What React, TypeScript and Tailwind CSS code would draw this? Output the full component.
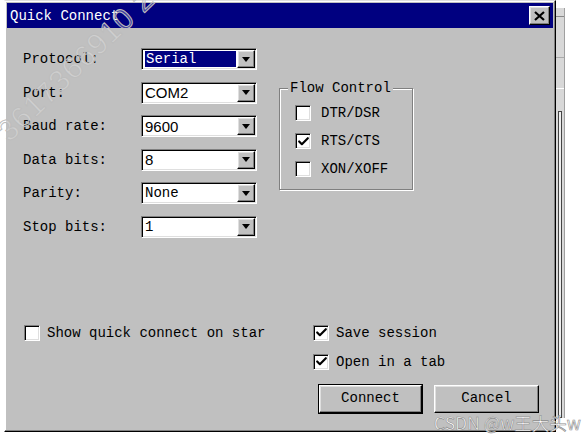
import { Check } from 'lucide-react'

const mono = "font-['Liberation_Mono',monospace]"

const sunken =
  'border border-t-[#808080] border-l-[#808080] border-b-white border-r-white shadow-[inset_1px_1px_0_#000,inset_-1px_-1px_0_#dfdfdf]'
const raised =
  'border border-t-white border-l-white border-b-black border-r-black shadow-[inset_-1px_-1px_0_#808080,inset_1px_1px_0_#dfdfdf]'

type Field = { label: string; value: string; sans?: boolean; active?: boolean }

const fields: Field[] = [
  { label: 'Protocol:', value: 'Serial', active: true },
  { label: 'Port:', value: 'COM2', sans: true },
  { label: 'Baud rate:', value: '9600', sans: true },
  { label: 'Data bits:', value: '8', sans: true },
  { label: 'Parity:', value: 'None' },
  { label: 'Stop bits:', value: '1' },
]

function Arrow() {
  return (
    <div className={`flex h-[18px] w-[18px] shrink-0 items-center justify-center bg-[#c0c0c0] ${raised}`}>
      <svg width="8" height="5" viewBox="0 0 8 5">
        <path d="M0 0h8L4 5z" fill="#000" />
      </svg>
    </div>
  )
}

function Select({ f }: { f: Field }) {
  return (
    <div className={`flex h-[22px] w-[116px] items-center bg-white pl-[3px] pr-[1px] ${sunken}`}>
      <div className="flex h-full flex-1 items-center py-[2px]">
        <span
          className={`flex h-full items-center text-[14px] leading-none ${f.sans ? "font-['Liberation_Sans',sans-serif] text-[15px]" : mono} ${
            f.active ? 'mr-[1px] w-full bg-[#000080] pl-[1px] text-white' : 'text-black'
          }`}
        >
          {f.value}
        </span>
      </div>
      <Arrow />
    </div>
  )
}

function Box({ checked }: { checked?: boolean }) {
  return (
    <div className={`flex h-[16px] w-[16px] shrink-0 items-center justify-center bg-white ${sunken}`}>
      {checked ? <Check size={13} strokeWidth={4} className="text-black" /> : null}
    </div>
  )
}

function CheckRow({ label, checked, gap = 'gap-[8px]' }: { label: string; checked?: boolean; gap?: string }) {
  return (
    <div className={`flex items-center ${gap}`}>
      <Box checked={checked} />
      <span className="text-[14px] leading-none text-black">{label}</span>
    </div>
  )
}

export default function App() {
  return (
    <div className={`relative flex h-[445px] w-[587px] overflow-hidden bg-white ${mono}`}>
      {/* dialog */}
      <div className="ml-[4px] flex h-[432px] w-[552px] shrink-0 flex-col border border-t-[#dfdfdf] border-l-white border-b-black border-r-black bg-[#c0c0c0] p-[2px] shadow-[inset_-1px_-1px_0_#808080,inset_1px_1px_0_#fff]">
        <div className="flex h-[25px] items-center justify-between bg-[#000080] pl-[3px] pr-[3px]">
          <span className="text-[14px] leading-none text-white">Quick Connect</span>
          <div className={`flex h-[19px] w-[21px] items-center justify-center bg-[#c0c0c0] ${raised}`}>
            <svg width="11" height="10" viewBox="0 0 11 10">
              <path d="M1 1l9 8M10 1l-9 8" stroke="#000" strokeWidth="2.2" />
            </svg>
          </div>
        </div>

        <div className="flex flex-1 flex-col">
          <div className="flex items-start pt-[20px]">
            <div className="flex flex-col gap-[11.6px] pl-[16px]">
              {fields.map((f) => (
                <div key={f.label} className="flex items-center">
                  <span className="w-[118px] text-[14px] leading-none text-black">{f.label}</span>
                  <Select f={f} />
                </div>
              ))}
            </div>

            <div className="relative ml-[22px] mt-[40px] h-[102px] w-[134px] border border-[#808080] shadow-[1px_1px_0_#fff,inset_1px_1px_0_#fff]">
              <span className="absolute -top-[8px] left-[8px] bg-[#c0c0c0] px-[2px] text-[14px] leading-none text-black">
                Flow Control
              </span>
              <div className="flex flex-col gap-[12px] pl-[15px] pt-[16px]">
                <CheckRow label="DTR/DSR" gap="gap-[10px]" />
                <CheckRow label="RTS/CTS" checked gap="gap-[10px]" />
                <CheckRow label="XON/XOFF" gap="gap-[10px]" />
              </div>
            </div>
          </div>

          <div className="mt-[87px] flex">
            <div className="w-[306px] pl-[17px]">
              <CheckRow label="Show quick connect on star" gap="gap-[7px]" />
            </div>
            <div className="flex flex-col">
              <div className="flex flex-col gap-[13px]">
                <CheckRow label="Save session" checked gap="gap-[7px]" />
                <CheckRow label="Open in a tab" checked gap="gap-[7px]" />
              </div>
              <div className="ml-[5px] mt-[14px] flex gap-[11px]">
                <div className="border border-black">
                  <div className={`flex h-[28px] w-[103px] items-center justify-center bg-[#c0c0c0] text-[14px] text-black ${raised}`}>
                    Connect
                  </div>
                </div>
                <div className={`mt-[1px] flex h-[28px] w-[105px] items-center justify-center bg-[#c0c0c0] text-[14px] text-black ${raised}`}>
                  Cancel
                </div>
              </div>
            </div>
          </div>
        </div>
      </div>

      {/* window behind */}
      <div className="mt-[8px] flex h-[410px] w-[9px] flex-col border-r border-[#a0a0a0] bg-[#d8d8d8]">
        <div className="mt-[8px] h-[1px] bg-[#888]" />
        <div className="mt-[40px] h-[1px] bg-[#aaa]" />
        <div className="mt-[30px] h-[1px] bg-white" />
        <div className="mx-[2px] mt-[22px] flex-1 border border-[#444] bg-[#eee]" />
      </div>

      {/* watermarks */}
      <span className="pointer-events-none absolute left-[-26px] top-[50px] origin-center -rotate-[44deg] font-['Liberation_Sans',sans-serif] text-[30px] leading-none tracking-[1px] text-white/25 [-webkit-text-stroke:1px_#bdbdbd]">
        3617366910 2
      </span>
      <span className="pointer-events-none absolute left-[434px] top-[414px] font-['Noto_Sans_CJK_SC',sans-serif] text-[17.5px] leading-none text-white [-webkit-text-stroke:0.6px_#8a8a8a]">
        CSDN @w王大头w
      </span>
    </div>
  )
}
